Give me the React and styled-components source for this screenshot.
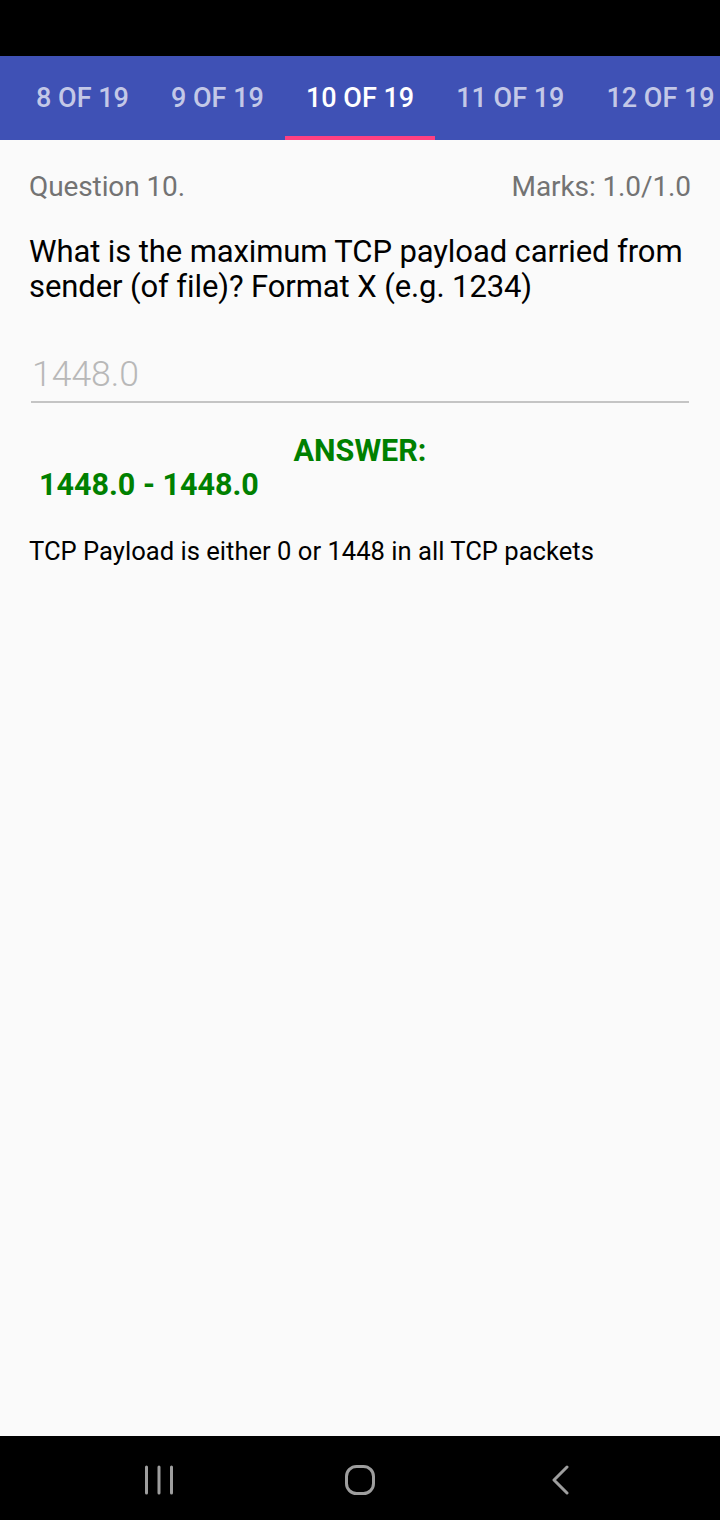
import styled, { createGlobalStyle } from "styled-components";

const GlobalStyle = createGlobalStyle`
    html, body {
        margin: 0;
        padding: 0;
        background: #000;
    }
    body {
        font-family: Roboto, "Noto Sans", sans-serif;
    }
`

const tabs = ["8 OF 19", "9 OF 19", "10 OF 19", "11 OF 19", "12 OF 19"];

/** 퀴즈 결과 -> 문제 상세 */
export default function App() {
    return (
        <Screen>
            <GlobalStyle />
            <StatusBar />
            <TabStrip>
                {tabs.map((t) => (
                    <Tab key={t} active={t === "10 OF 19"}>{t}</Tab>
                ))}
            </TabStrip>
            <Content>
                <HeaderRow>
                    <Muted>Question 10.</Muted>
                    <Muted>Marks: 1.0/1.0</Muted>
                </HeaderRow>
                <QuestionText>
                    What is the maximum TCP payload carried from sender (of file)? Format X (e.g. 1234)
                </QuestionText>
                <AnswerField>
                    <Placeholder>1448.0</Placeholder>
                </AnswerField>
                <AnswerTitle>ANSWER:</AnswerTitle>
                <AnswerRange>1448.0 - 1448.0</AnswerRange>
                <Explanation>TCP Payload is either 0 or 1448 in all TCP packets</Explanation>
            </Content>
            <NavBar>
                <NavIcon viewBox="0 0 30 30">
                    <path d="M1.5 2v26M14 2v26M26.5 2v26" stroke="#9e9e9e" strokeWidth="3" strokeLinecap="round" />
                </NavIcon>
                <NavIcon viewBox="0 0 30 30">
                    <rect x="1.5" y="1.5" width="27" height="27" rx="10" fill="none" stroke="#9e9e9e" strokeWidth="3" />
                </NavIcon>
                <NavIcon viewBox="0 0 30 30">
                    <path d="M22 2L9 15l13 13" fill="none" stroke="#9e9e9e" strokeWidth="3" strokeLinecap="round" strokeLinejoin="round" />
                </NavIcon>
            </NavBar>
        </Screen>
    )
}

const Screen = styled.div`
    display: flex;
    flex-direction: column;
    width: 720px;
    height: 1520px;
    overflow: hidden;
    background: #fafafa;
`

const StatusBar = styled.div`
    height: 56px;
    background: #000;
    flex-shrink: 0;
`

const TabStrip = styled.div`
    display: flex;
    height: 84px;
    padding-left: 15px;
    background: #3f51b5;
    overflow: hidden;
    flex-shrink: 0;
`

const Tab = styled.div`
    flex-shrink: 0;
    display: flex;
    align-items: center;
    justify-content: center;
    box-sizing: border-box;
    padding: 4px 21px 0;
    font-size: 27px;
    font-weight: 500;
    color: ${(p) => (p.active ? "#fff" : "rgba(255, 255, 255, 0.7)")};
    border-bottom: 4px solid ${(p) => (p.active ? "#ff4081" : "transparent")};
`

const Content = styled.div`
    flex: 1;
    padding: 30px 29px 0;
    background: #fafafa;
`

const HeaderRow = styled.div`
    display: flex;
    justify-content: space-between;
    align-items: baseline;
`

const Muted = styled.span`
    font-size: 28px;
    color: #737373;
    letter-spacing: -0.1px;
`

const QuestionText = styled.div`
    margin-top: 31px;
    font-size: 31px;
    line-height: 35px;
    color: #000;
    letter-spacing: -0.1px;
`

const AnswerField = styled.div`
    margin: 50px 2px 0;
    padding-bottom: 7px;
    border-bottom: 2px solid #c4c4c4;
`

const Placeholder = styled.div`
    font-size: 35.5px;
    line-height: 40px;
    font-weight: 300;
    color: #b8b8b8;
    padding-left: 1px;
`

const AnswerTitle = styled.div`
    margin-top: 30px;
    text-align: center;
    font-size: 30.5px;
    line-height: 36px;
    font-weight: 700;
    color: #008000;
`

const AnswerRange = styled.div`
    margin-top: -2px;
    padding-left: 10px;
    font-size: 30.5px;
    line-height: 36px;
    font-weight: 700;
    color: #008000;
`

const Explanation = styled.div`
    margin-top: 33px;
    font-size: 25.6px;
    line-height: 30px;
    color: #000;
`

const NavBar = styled.div`
    height: 84px;
    flex-shrink: 0;
    box-sizing: border-box;
    padding: 4px 60px 0;
    background: #000;
    display: grid;
    grid-template-columns: 1fr 1fr 1fr;
    align-items: center;
`

const NavIcon = styled.svg`
    width: 30px;
    height: 30px;
    justify-self: center;
`
